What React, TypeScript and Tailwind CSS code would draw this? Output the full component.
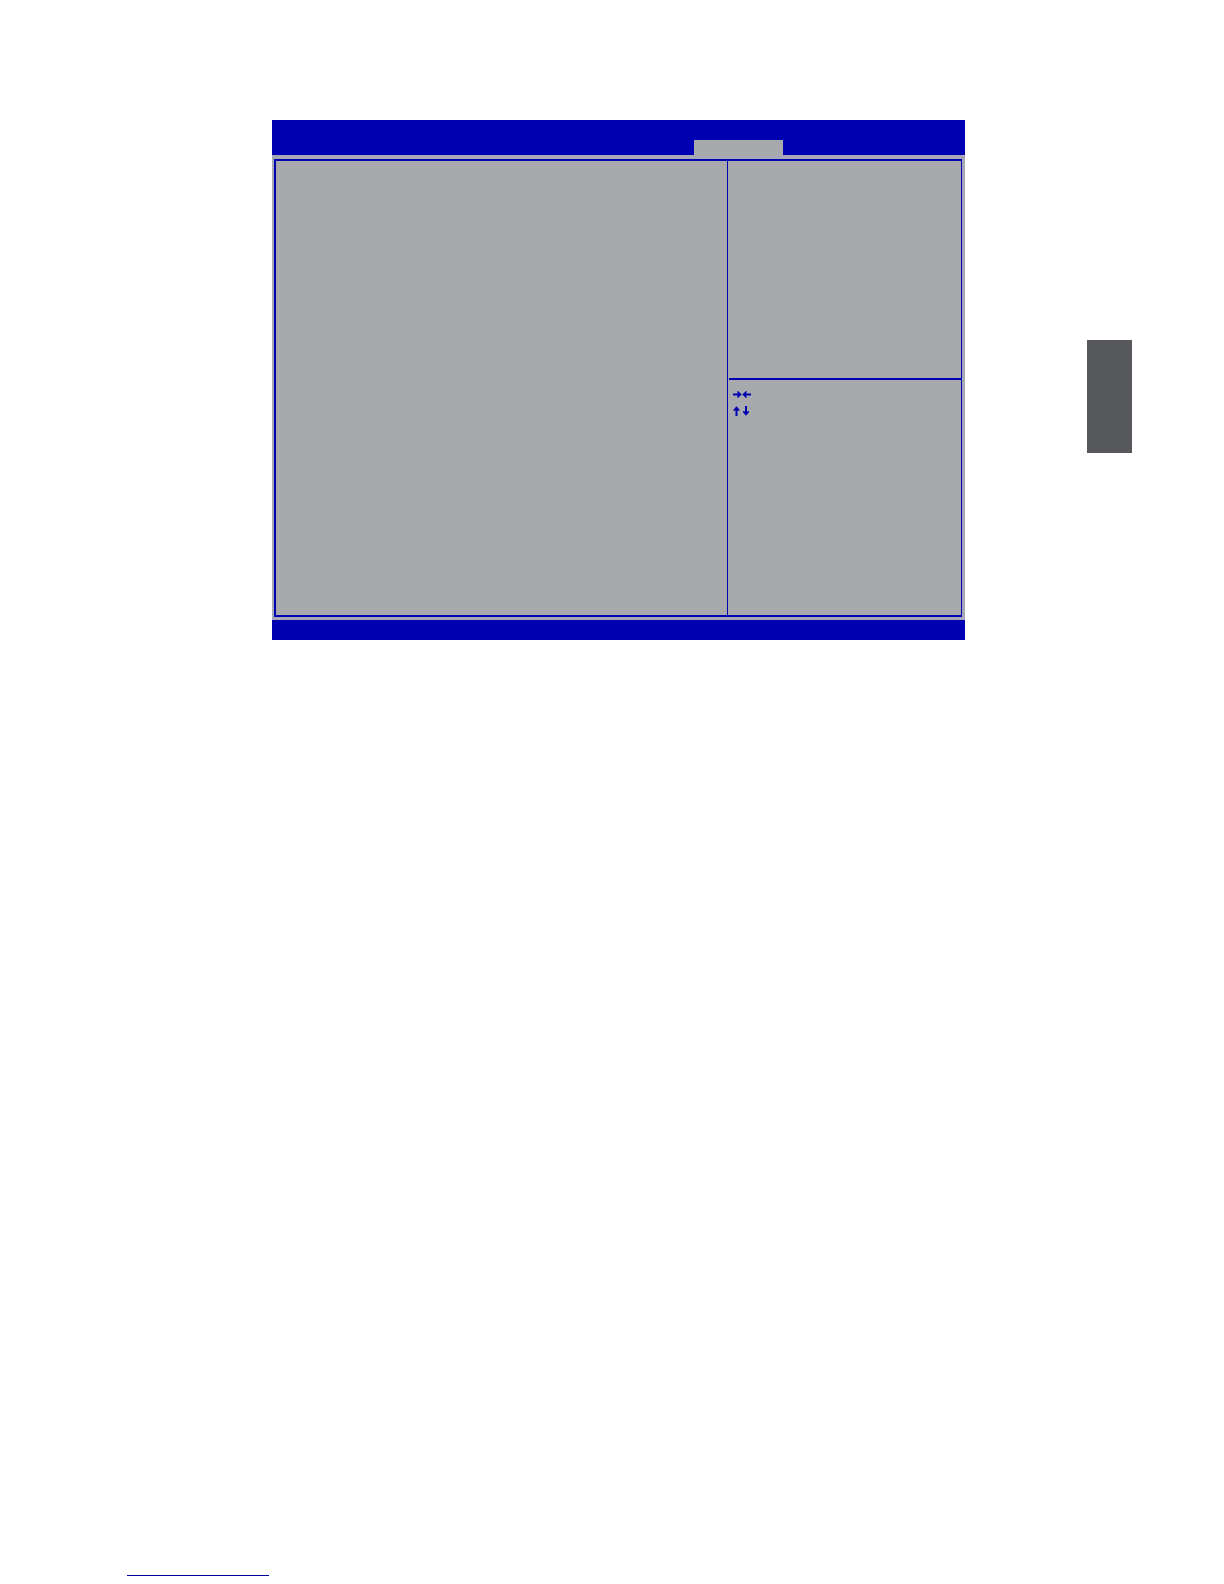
function HorizontalArrows() {
  return (
    <svg className="block" width="18" height="7" viewBox="0 0 18 7" fill="#0000b0" aria-hidden="true">
      <path d="M0 2.5H4.8L4 .3H5.2L8.8 3.5L5.2 6.7H4L4.8 4.5H0Z" />
      <path d="M18 2.5H13.2L14 .3H12.8L9.2 3.5L12.8 6.7H14L13.2 4.5H18Z" />
    </svg>
  );
}

function VerticalArrows() {
  return (
    <svg className="block" width="18" height="10" viewBox="0 0 18 10" fill="#0000b0" aria-hidden="true">
      <path d="M2.5 10V4.4L.5 5V3.8L3.5 .2L6.5 3.8V5L4.5 4.4V10Z" />
      <path d="M12 0V5.6L10 5V6.2L13 9.8L16 6.2V5L14 5.6V0Z" />
    </svg>
  );
}

function SetupScreen() {
  return (
    <section className="flex flex-col bg-[#a6a8b8]">
      <header className="grid grid-cols-[422fr_89fr_182fr] bg-[#0000b3] pt-5">
        <div className="col-start-2 h-[15px] bg-[#a7a9ac]" />
      </header>

      <div className="pt-1 pr-[3px] pb-[3px] pl-0.5">
        <div className="grid grid-cols-[451fr_234fr] border-2 border-r border-[#0000b0] bg-[#a7a9ac]">
          <main />
          <aside className="border-l border-[#0000b0]">
            <div className="ml-px h-[219px] border-b-2 border-[#0000b0]" />
            <div className="flex h-[235px] flex-col gap-2 px-[5px] pt-[11px]">
              <HorizontalArrows />
              <VerticalArrows />
            </div>
          </aside>
        </div>
      </div>

      <footer className="h-5 bg-[#0000b3]" />
    </section>
  );
}

export default function App() {
  return (
    <div className="flex min-h-screen flex-col justify-between bg-white pt-[120px] pb-2">
      <div className="grid grid-cols-[272fr_693fr_122fr_45fr_92fr] items-start">
        <div className="col-start-2">
          <SetupScreen />
        </div>
        {/* chapter thumb tab on the page edge */}
        <div className="col-start-4 mt-[220px] h-[113px] bg-[#57585b]" />
      </div>

      <div className="grid grid-cols-[127fr_142fr_955fr]">
        <div className="col-start-2 h-px bg-[#0000a0]" />
      </div>
    </div>
  );
}
